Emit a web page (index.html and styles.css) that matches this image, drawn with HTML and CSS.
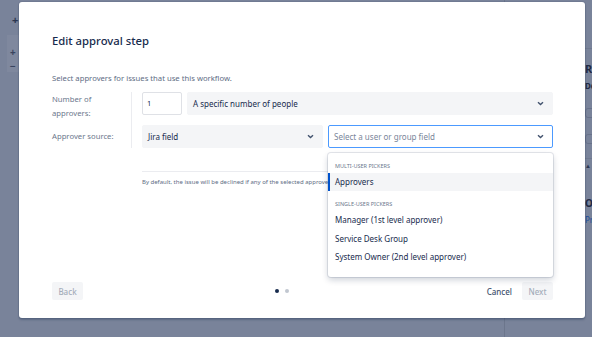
FILE: index.html
```html
<!DOCTYPE html>
<html lang="en">
<head>
    <meta charset="UTF-8">
    <title>Edit approval step</title>
    <link rel="stylesheet" href="styles.css">
</head>
<body>

    <!-- page behind the dialog -->
    <div class="app">
        <aside class="rail">
            <div class="rail-add">+</div>
            <div class="zoom-box">
                <span>+</span>
                <span>&minus;</span>
            </div>
        </aside>
        <main class="canvas"></main>
        <aside class="side">
            <div class="side-inner">
                <div class="side-title">Request type</div>
                <div class="side-sub">Description</div>
                <div class="side-box"></div>
                <div class="side-box"></div>
                <div class="side-toggle">&#9650;</div>
                <div class="side-op">Options</div>
                <div class="side-link">Properties</div>
            </div>
        </aside>
    </div>

    <!-- dialog -->
    <div class="dialog">
        <h1 class="dialog-title">Edit approval step</h1>
        <p class="intro">Select approvers for issues that use this workflow.</p>

        <div class="form">
            <div class="labels">
                <div class="label label-two">Number of<br>approvers:</div>
                <div class="label">Approver source:</div>
            </div>
            <div class="fields">
                <div class="row">
                    <div class="num">1</div>
                    <div class="select select-grow">
                        <span>A specific number of people</span>
                        <svg class="chev" width="7" height="5" viewBox="0 0 7 5"><path d="M1 1.2l2.5 2.4L6 1.2"/></svg>
                    </div>
                </div>
                <div class="row">
                    <div class="select select-source">
                        <span>Jira field</span>
                        <svg class="chev" width="7" height="5" viewBox="0 0 7 5"><path d="M1 1.2l2.5 2.4L6 1.2"/></svg>
                    </div>
                    <div class="select select-grow select-focus">
                        <span class="placeholder">Select a user or group field</span>
                        <svg class="chev" width="7" height="5" viewBox="0 0 7 5"><path d="M1 1.2l2.5 2.4L6 1.2"/></svg>

                        <div class="menu">
                            <div class="menu-group">Multi-user pickers</div>
                            <div class="option option-active">Approvers</div>
                            <div class="menu-group menu-group-next">Single-user pickers</div>
                            <div class="option">Manager (1st level approver)</div>
                            <div class="option">Service Desk Group</div>
                            <div class="option">System Owner (2nd level approver)</div>
                        </div>
                    </div>
                </div>
            </div>
        </div>

        <div class="note">
            <div class="note-text">By default, the issue will be declined if any of the selected approvers declines it.</div>
        </div>

        <div class="footer">
            <button class="btn btn-off">Back</button>
            <div class="dots">
                <span class="dot dot-on"></span>
                <span class="dot"></span>
            </div>
            <div class="actions">
                <button class="btn btn-link">Cancel</button>
                <button class="btn btn-off">Next</button>
            </div>
        </div>
    </div>

</body>
</html>
```

FILE: styles.css
```css
* {
    box-sizing: border-box;
}
html, body {
    margin: 0;
    height: 100%;
}
body {
    font-family: "Noto Sans", "Open Sans", sans-serif;
    background-color: #79839a;
    color: #172b4d;
    overflow: hidden;
    position: relative;
}

/* background page (already dimmed by the overlay) */
.app {
    display: flex;
    height: 337px;
}
.rail {
    width: 19px;
    flex: none;
}
.rail-add {
    height: 35px;
    padding: 14px 0 0 12px;
    font-size: 11px;
    font-weight: 700;
    line-height: 12px;
    color: #2b3650;
}
.zoom-box {
    margin-left: 7px;
    height: 37px;
    background-color: #7f889e;
    display: flex;
    flex-direction: column;
    padding: 10px 0 0 3px;
    font-size: 10px;
    font-weight: 700;
    line-height: 14px;
    color: #3a4560;
}
.canvas {
    flex: 1;
}
.side {
    width: 88px;
    flex: none;
    border-left: 1px solid #6c768c;
    overflow: hidden;
}
.side-inner {
    margin-top: 48px;
    border-top: 1px solid #6f798f;
    padding: 13px 0 0 80px;
    white-space: nowrap;
}
.side-title {
    font-size: 11px;
    font-weight: 700;
    color: #1f2a44;
    line-height: 14px;
}
.side-sub {
    margin-top: 4px;
    font-size: 8px;
    font-weight: 700;
    color: #1f2a44;
    line-height: 12px;
}
.side-box {
    margin-top: 16px;
    width: 14px;
    height: 10px;
    border: 1px solid #68728a;
    border-radius: 3px;
}
.side-toggle {
    margin-top: 14px;
    padding-top: 3px;
    border-top: 1px solid #6f798f;
    font-size: 6px;
    color: #2b3650;
}
.side-op {
    margin-top: 26px;
    font-size: 10px;
    font-weight: 700;
    color: #1f2a44;
    line-height: 14px;
}
.side-link {
    margin-top: 4px;
    font-size: 8px;
    color: #1d4d99;
    line-height: 12px;
}

/* dialog */
.dialog {
    position: absolute;
    left: 19px;
    top: 2px;
    width: 566px;
    height: 316px;
    background: white;
    border-radius: 3px;
    box-shadow: 0 0 0 1px rgba(9, 30, 66, 0.08), 0 2px 2px rgba(9, 30, 66, 0.25);
    padding: 31px 32px 18px 33px;
    display: flex;
    flex-direction: column;
}
.dialog-title {
    margin: 0;
    font-size: 11.3px;
    font-weight: 500;
    line-height: 16px;
    color: #172b4d;
}
.intro {
    margin: 24px 0 0;
    font-size: 7.7px;
    line-height: 10px;
    color: #5e6c84;
}

.form {
    display: flex;
    margin-top: 9px;
}
.labels {
    width: 80px;
    border-right: 1px solid #ebecf0;
    display: flex;
    flex-direction: column;
    gap: 10px;
}
.label {
    height: 23px;
    font-size: 7.7px;
    line-height: 23px;
    color: #6b778c;
}
.label-two {
    line-height: 14px;
}
.fields {
    flex: 1;
    padding-left: 10px;
    display: flex;
    flex-direction: column;
    gap: 10px;
}
.row {
    display: flex;
    gap: 5px;
    height: 23px;
}
.num {
    width: 40px;
    border: 1px solid #dfe1e6;
    border-radius: 2px;
    padding-left: 4px;
    font-size: 7.5px;
    line-height: 21px;
}
.select {
    position: relative;
    display: flex;
    align-items: center;
    justify-content: space-between;
    background-color: #f4f5f7;
    border: 1px solid #f4f5f7;
    border-radius: 2px;
    padding: 0 8px 0 5px;
    font-size: 8px;
    color: #172b4d;
}
.select-grow {
    flex: 1;
}
.select-source {
    width: 181px;
}
.select-focus {
    background: white;
    border-color: #4c9aff;
}
.placeholder {
    color: #7a869a;
}
.chev {
    fill: none;
    stroke: #42526e;
    stroke-width: 1.4;
}

.menu {
    position: absolute;
    top: 27px;
    left: -1px;
    right: -1px;
    height: 124px;
    background: white;
    border-radius: 3px;
    box-shadow: 0 0 0 1px rgba(9, 30, 66, 0.1), 0 3px 6px rgba(9, 30, 66, 0.2);
    padding-top: 6px;
    z-index: 2;
}
.menu-group {
    height: 14px;
    line-height: 14px;
    padding-left: 7px;
    font-size: 5.5px;
    text-transform: uppercase;
    color: #6b778c;
}
.menu-group-next {
    margin-top: 6px;
}
.option {
    height: 18.5px;
    line-height: 18.5px;
    padding-left: 7px;
    font-size: 8px;
    color: #172b4d;
}
.option-active {
    height: 18px;
    line-height: 18px;
    background-color: #f4f5f7;
    box-shadow: inset 2px 0 0 #0052cc;
}

/* the open menu covers the rest of this line */
.note {
    margin: 23px 0 0 90px;
    border-top: 1px solid #ebecf0;
    padding-top: 6px;
}
.note-text {
    width: 186px;
    overflow: hidden;
    font-size: 6px;
    line-height: 9px;
    color: #5e6c84;
    white-space: nowrap;
}

.footer {
    margin-top: auto;
    display: flex;
    justify-content: space-between;
    align-items: center;
}
.btn {
    font-family: inherit;
    font-size: 8px;
    font-weight: 500;
    height: 18px;
    padding: 0 5px;
    border: none;
    border-radius: 2px;
    background: none;
    cursor: pointer;
}
.btn-off {
    width: 31px;
    background-color: #f4f5f7;
    color: #a5adba;
}
.btn-link {
    color: #42526e;
}
.actions {
    display: flex;
    gap: 5px;
}
.dots {
    display: flex;
    gap: 6px;
}
.dot {
    width: 4px;
    height: 4px;
    border-radius: 50%;
    background-color: #c1c7d0;
}
.dot-on {
    background-color: #172b4d;
}
```
